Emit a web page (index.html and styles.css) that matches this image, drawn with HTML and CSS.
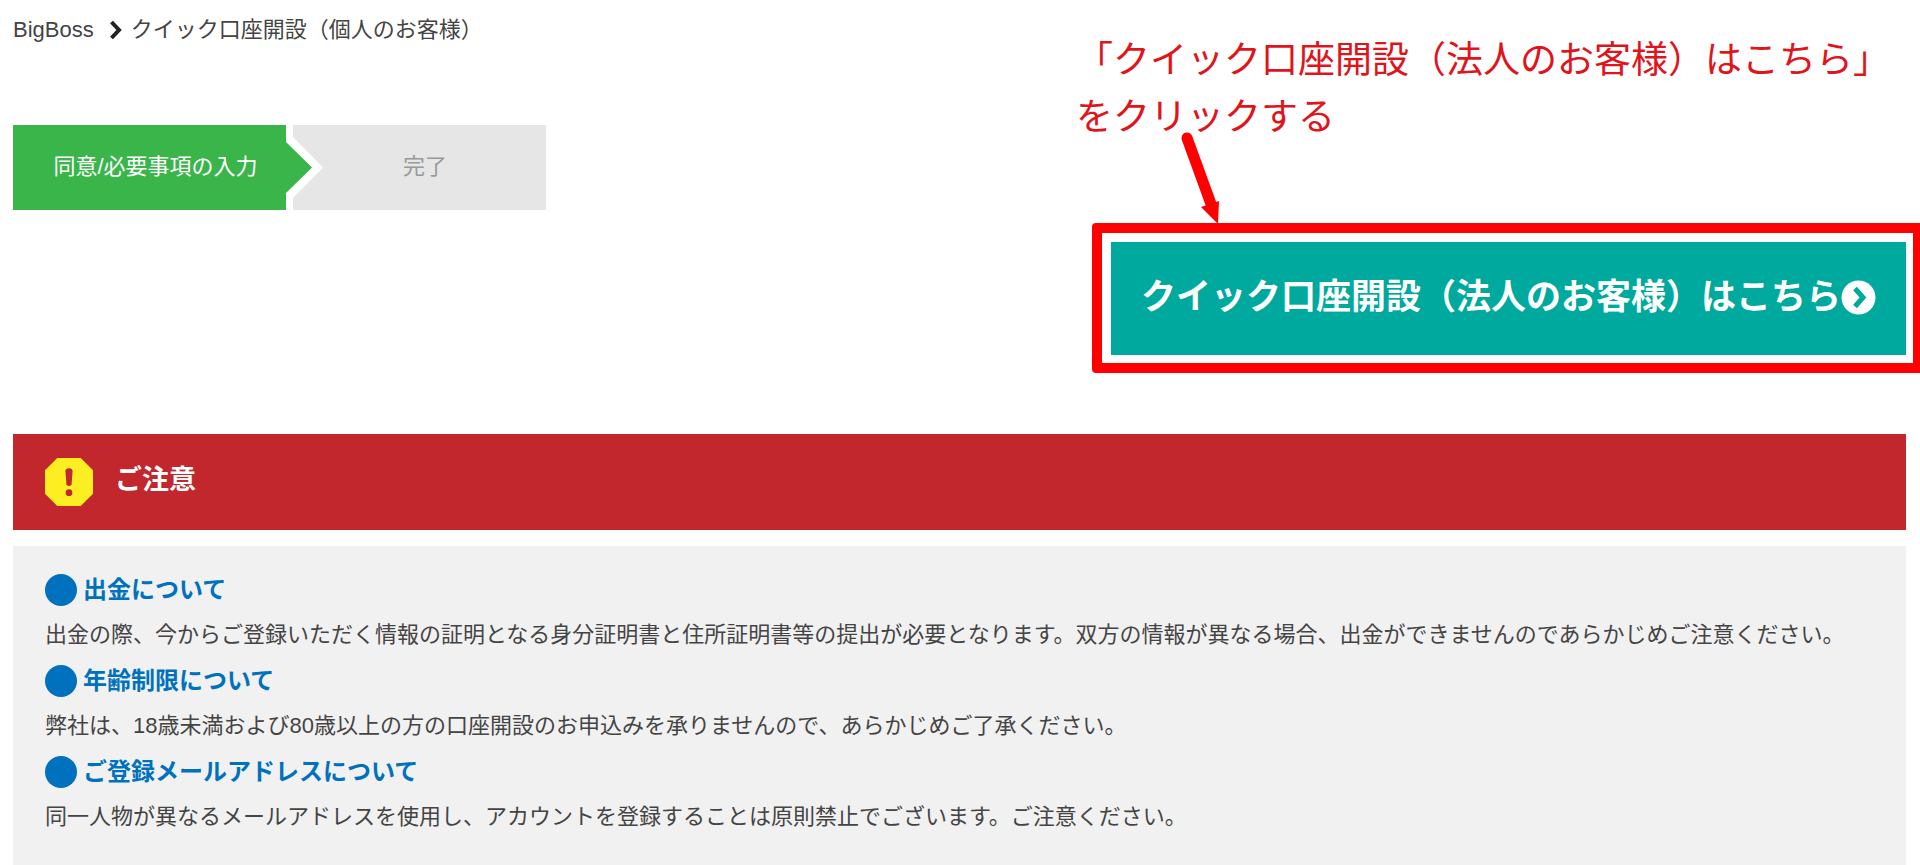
FILE: index.html
```html
<!DOCTYPE html>
<html lang="ja">
<head>
<meta charset="utf-8">
<title>クイック口座開設（個人のお客様） | BigBoss</title>
<meta name="viewport" content="width=device-width, initial-scale=1">
<link rel="stylesheet" href="styles.css">
</head>
<body>
<main class="page">
  <div class="intro">
    <div class="intro-left">
      <nav class="breadcrumb" aria-label="パンくずリスト">
        <a href="#">BigBoss</a>
        <svg class="breadcrumb-arrow" viewBox="0 0 14 22" aria-hidden="true"><path d="M2.500 3 L10 11 L2.500 19" fill="none" stroke="#222" stroke-width="4"/></svg>
        <span>クイック口座開設（個人のお客様）</span>
      </nav>
      <ol class="steps">
        <li class="step step-current">同意/必要事項の入力
          <svg class="step-arrow" viewBox="0 0 40 85" aria-hidden="true"><path d="M0 0 H7 V12 L37 42.500 L7 73 V85 H0 Z" fill="#fff"/><path d="M0 17 L26 42.500 L0 68 Z" fill="#39b54a"/></svg>
        </li>
        <li class="step step-next">完了</li>
      </ol>
    </div>
    <div class="intro-right">
      <p class="note">「クイック口座開設（法人のお客様）はこちら」<br>をクリックする</p>
      <div class="cta-wrap">
        <a class="cta" href="#"><span>クイック口座開設（法人のお客様）はこちら</span><svg class="cta-icon" viewBox="0 0 35 35" aria-hidden="true"><circle cx="17.500" cy="17.500" r="17" fill="#fff"/><path d="M14 8.500 L22 17.500 L14 26.500" fill="none" stroke="#00a99d" stroke-width="5"/></svg></a>
        <div class="cta-frame"></div>
        <svg class="cta-pointer" viewBox="0 0 50 100" aria-hidden="true"><path d="M16 14 L40 80" stroke="#f00" stroke-width="11" stroke-linecap="round"/><path d="M30 83 L48 77 L47 100 Z" fill="#f00"/></svg>
      </div>
    </div>
  </div>

  <section class="caution">
    <header class="caution-head">
      <svg class="caution-icon" viewBox="0 0 47 47" aria-hidden="true"><path d="M12 0 H35 L47 12 V35 L35 47 H12 L0 35 V12 Z" fill="#fcee21"/><path d="M20 13 Q20 10 23.500 10 Q27 10 27 13 L26 26 Q23.500 29 21 26 Z" fill="#c1272d"/><circle cx="23.500" cy="34" r="3.300" fill="#c1272d"/></svg>
      <h1 class="caution-title">ご注意</h1>
    </header>
    <div class="caution-body">
      <h2 class="topic">出金について</h2>
      <p class="text">出金の際、今からご登録いただく情報の証明となる身分証明書と住所証明書等の提出が必要となります。双方の情報が異なる場合、出金ができませんのであらかじめご注意ください。</p>
      <h2 class="topic">年齢制限について</h2>
      <p class="text">弊社は、18歳未満および80歳以上の方の口座開設のお申込みを承りませんので、あらかじめご了承ください。</p>
      <h2 class="topic">ご登録メールアドレスについて</h2>
      <p class="text">同一人物が異なるメールアドレスを使用し、アカウントを登録することは原則禁止でございます。ご注意ください。</p>
    </div>
  </section>
</main>
</body>
</html>
```

FILE: styles.css
```css
* {
  box-sizing: border-box;
}

body {
  margin: 0;
  overflow-x: hidden;
  background: #fff;
  color: #444;
  font-family: "Liberation Sans", "Noto Sans CJK JP", sans-serif;
  font-size: 22px;
  line-height: 32px;
}

h1,
h2,
p,
ol {
  margin: 0;
  padding: 0;
}

a {
  color: inherit;
  text-decoration: none;
}

.page {
  padding: 0 14px 0 13px;
}

.intro {
  display: flex;
  justify-content: space-between;
}

.breadcrumb {
  display: flex;
  align-items: center;
  padding-top: 14px;
}

.breadcrumb-arrow {
  width: 14px;
  height: 22px;
  margin: 0 8px 0 15px;
}

.steps {
  display: flex;
  width: 533px;
  margin-top: 79px;
  list-style: none;
}

.step {
  position: relative;
  flex: 1;
  padding: 26px 0 27px;
  background: #e6e6e6;
  color: #999;
  text-align: center;
}

.step-current {
  flex: 0 0 273px;
  padding-right: 12px;
  padding-left: 24px;
  background: #39b54a;
  color: #fff;
}

.step-next {
  padding-left: 18px;
}

.step-arrow {
  position: absolute;
  top: 0;
  left: 100%;
  z-index: 1;
  width: 40px;
  height: 85px;
}

.intro-right {
  display: flex;
  flex-direction: column;
  align-items: flex-end;
  padding-top: 32px;
}

.note {
  padding-right: 16px;
  color: #e0141a;
  font-size: 37px;
  line-height: 57px;
}

.cta-wrap {
  position: relative;
  margin-top: 96px;
}

.cta {
  display: flex;
  align-items: center;
  padding: 30px 30px 33px;
  background: #00a99d;
  color: #fff;
  font-size: 35px;
  font-weight: bold;
  line-height: 50px;
}

.cta-icon {
  width: 35px;
  height: 35px;
}

.cta-frame {
  position: absolute;
  inset: -19px -17px -18px -19px;
  border: 10px solid #f00;
  border-radius: 4px;
  pointer-events: none;
}

.cta-pointer {
  position: absolute;
  bottom: 100%;
  left: 60px;
  width: 50px;
  height: 100px;
  margin-bottom: 18px;
}

.caution {
  margin-top: 79px;
}

.caution-head {
  display: flex;
  align-items: center;
  gap: 22px;
  padding: 24px 32px;
  background: #c1272d;
  color: #fff;
}

.caution-icon {
  width: 48px;
  height: 48px;
}

.caution-title {
  padding-bottom: 4px;
  font-size: 27px;
  line-height: 40px;
}

.caution-body {
  margin-top: 16px;
  padding: 21px 32px 25px;
  background: #f1f1f1;
}

.topic {
  display: flex;
  align-items: center;
  gap: 6px;
  color: #0071bc;
  font-size: 24px;
  line-height: 45px;
}

.topic::before {
  content: "";
  width: 32px;
  height: 32px;
  border-radius: 50%;
  background: #0071bc;
}

.text {
  line-height: 46px;
}
```
